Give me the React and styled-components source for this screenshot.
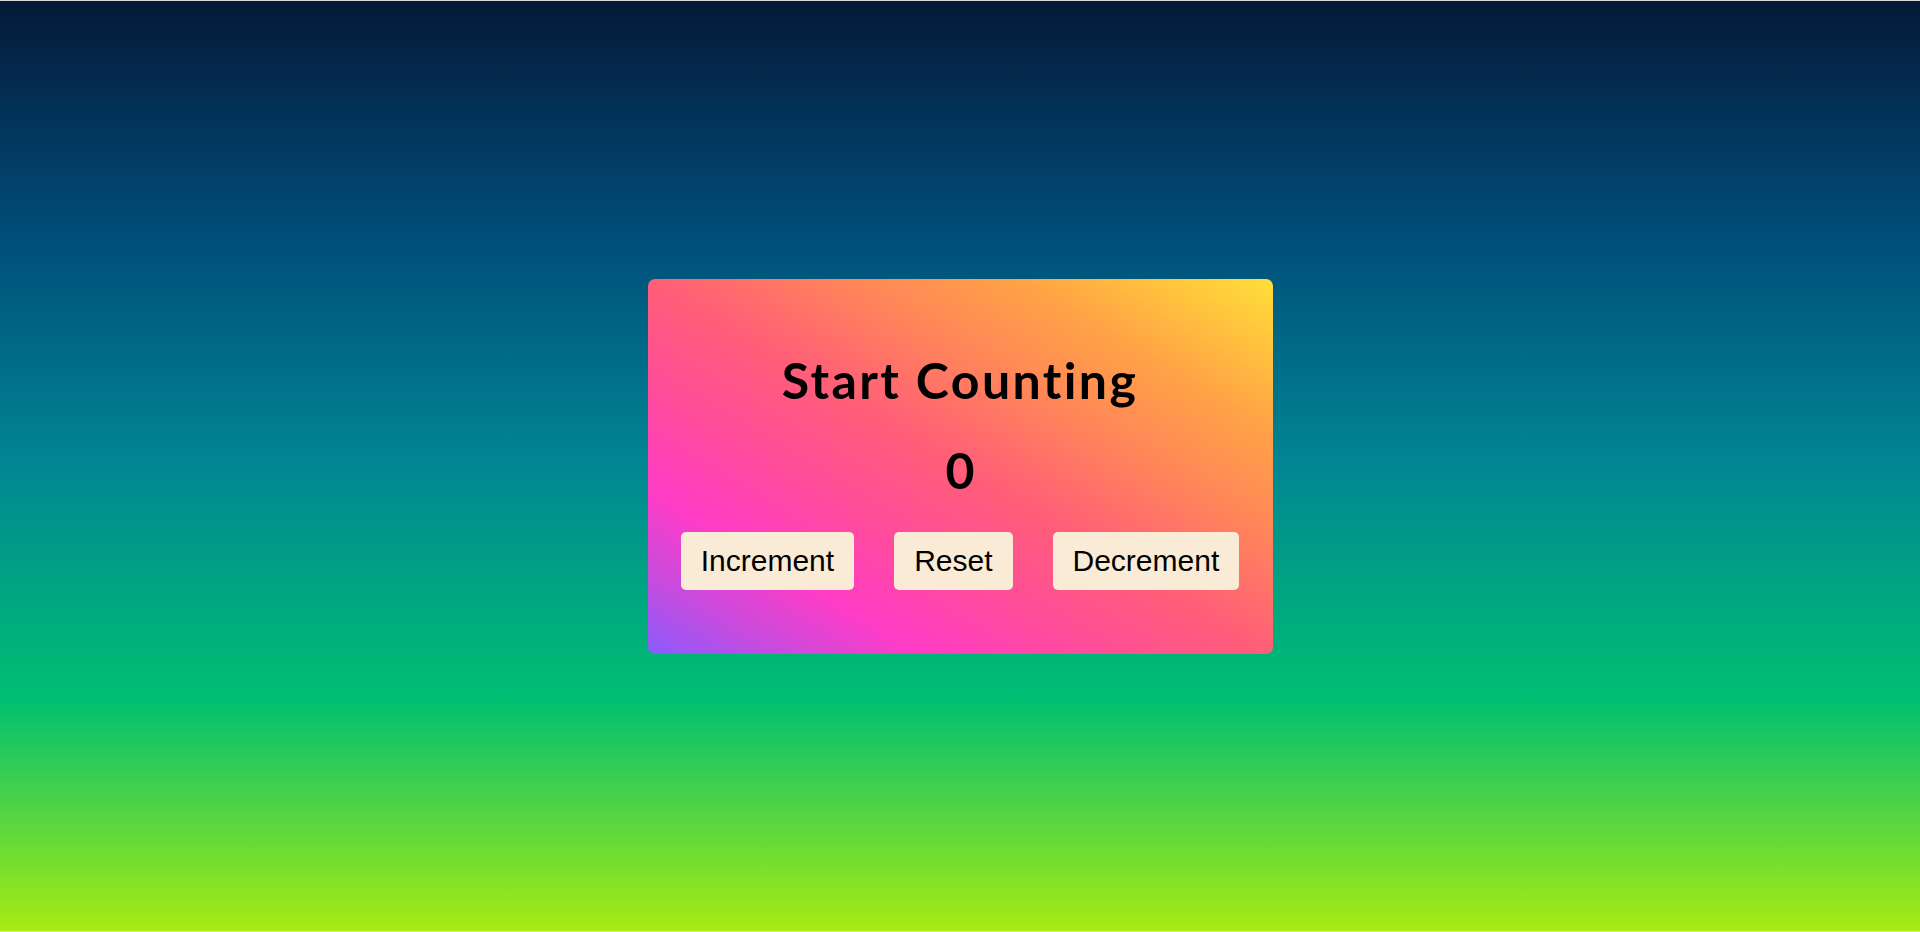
import React, { useState } from "react";
import styled, { createGlobalStyle } from "styled-components";

const GlobalStyle = createGlobalStyle`
  * {
    box-sizing: border-box;
  }
  html, body {
    margin: 0;
    padding: 0;
    background: #dcdcdc;
  }
`;

const Page = styled.div`
  margin: 1px 0;
  height: calc(100vh - 2px);
  display: flex;
  justify-content: center;
  align-items: center;
  background-image: linear-gradient(
    to bottom,
    #051937,
    #004d7a,
    #008793,
    #00bf72,
    #a8eb12
  );
`;

const Card = styled.div`
  width: 625px;
  height: 375px;
  padding-top: 71px;
  border-radius: 7px;
  display: flex;
  flex-direction: column;
  align-items: center;
  background-image: linear-gradient(
    to right top,
    #8a5cff 0%,
    #c44ce0 10%,
    #ff3cc6 22%,
    #ff4d9a 36%,
    #ff5e78 50%,
    #ff8659 66%,
    #ffa446 80%,
    #ffc83c 92%,
    #ffdf3a 100%
  );
`;

const Title = styled.h1`
  margin: 0;
  font-family: "Comic Sans MS", Lato, sans-serif;
  font-weight: 700;
  font-size: 50px;
  line-height: 60px;
  letter-spacing: 2.4px;
  color: #000;
`;

const Count = styled.h2`
  margin: 30px 0 0;
  font-family: "Comic Sans MS", Lato, sans-serif;
  font-weight: 700;
  font-size: 50px;
  line-height: 60px;
  color: #000;
`;

const Buttons = styled.div`
  margin-top: 32px;
  display: flex;
  gap: 40px;
`;

const Button = styled.button`
  border: none;
  border-radius: 5px;
  padding: 12px 20px;
  background: antiquewhite;
  color: #000;
  font-family: "Liberation Sans", Arial, sans-serif;
  font-size: 30px;
  cursor: pointer;
`;

export default function App() {
  const [count, setCount] = useState(0);
  return (
    <>
      <GlobalStyle />
      <Page>
        <Card>
          <Title>Start Counting</Title>
          <Count>{count}</Count>
          <Buttons>
            <Button onClick={() => setCount(count + 1)}>Increment</Button>
            <Button onClick={() => setCount(0)}>Reset</Button>
            <Button onClick={() => setCount(count - 1)}>Decrement</Button>
          </Buttons>
        </Card>
      </Page>
    </>
  );
}
